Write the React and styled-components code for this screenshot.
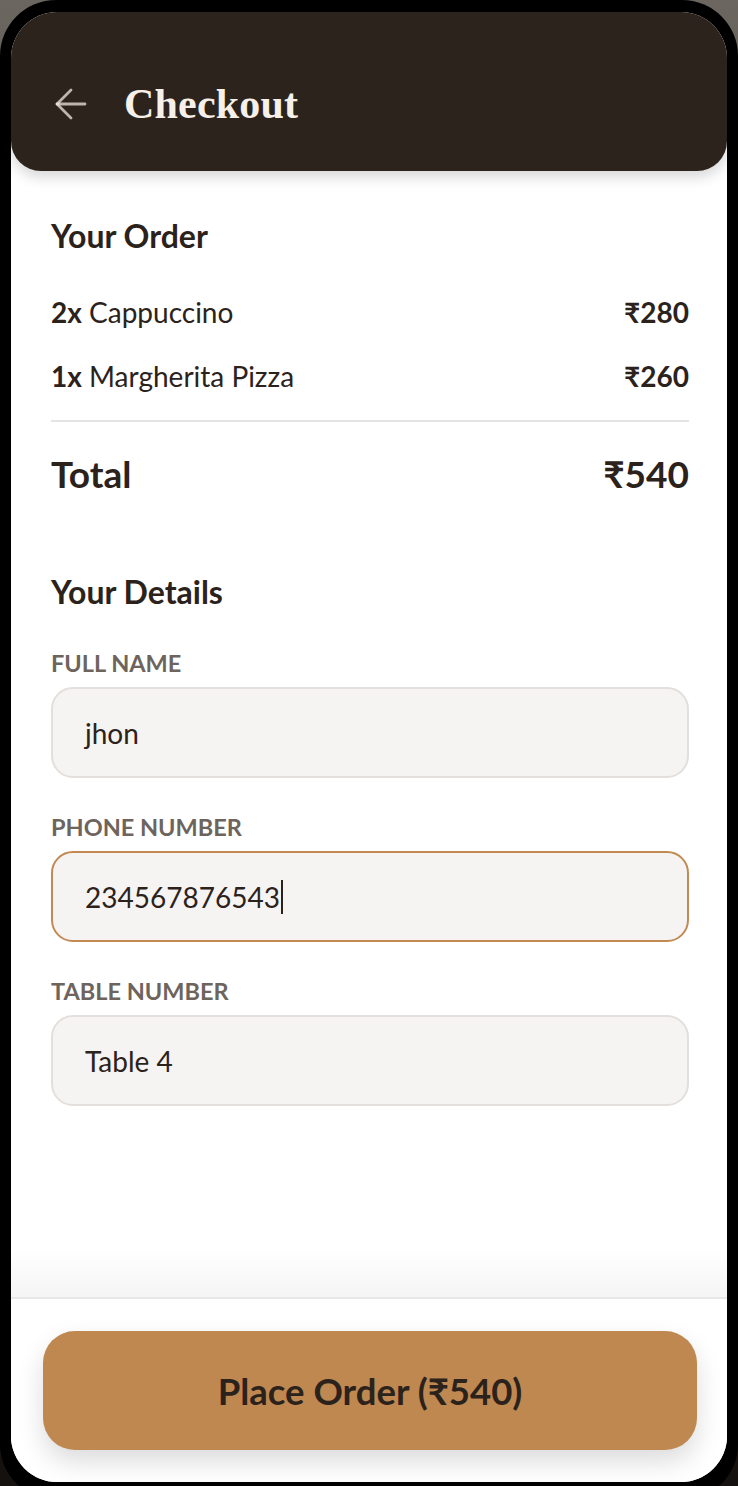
import styled, { createGlobalStyle } from 'styled-components'
import { ArrowLeft } from 'lucide-react'

const order = [
  { qty: 2, name: 'Cappuccino', price: 280 },
  { qty: 1, name: 'Margherita Pizza', price: 260 },
]

const fields = [
  { label: 'Full Name', value: 'jhon' },
  { label: 'Phone Number', value: '234567876543', active: true },
  { label: 'Table Number', value: 'Table 4' },
]

const App = () => (
  <>
    <GlobalStyle />
    <Frame>
      <Screen>
        <Header>
          <BackButton aria-label="Back">
            <ArrowLeft size={48} strokeWidth={1.4} />
          </BackButton>
          <Title>Checkout</Title>
        </Header>

        <Content>
          <SectionTitle>Your Order</SectionTitle>
          <ItemList>
            {order.map((item) => (
              <ItemRow key={item.name}>
                <span>
                  <Qty>{item.qty}x</Qty> {item.name}
                </span>
                <Price>₹{item.price}</Price>
              </ItemRow>
            ))}
          </ItemList>
          <TotalRow>
            <span>Total</span>
            <span>₹540</span>
          </TotalRow>

          <SectionTitle $spaced>Your Details</SectionTitle>
          <Form>
            {fields.map((f) => (
              <Field key={f.label}>
                <Label>{f.label}</Label>
                <InputBox $active={f.active}>
                  {f.value}
                  {f.active && <Caret />}
                </InputBox>
              </Field>
            ))}
          </Form>
        </Content>

        <Footer>
          <PlaceButton>Place Order (₹540)</PlaceButton>
        </Footer>
      </Screen>
    </Frame>
  </>
)

export default App

const GlobalStyle = createGlobalStyle`
  html, body {
    margin: 0;
    padding: 0;
  }
  body {
    background: linear-gradient(180deg, #6b6660 0%, #3a332e 50%, #14100d 100%);
    font-family: Lato, "Noto Sans", sans-serif;
    color: #2c221c;
    overflow: hidden;
  }
`

const Frame = styled.div`
  width: 738px;
  height: 1500px;
  box-sizing: border-box;
  padding: 12px 11px 18px;
  background: #000;
  border-radius: 56px;
`

const Screen = styled.div`
  height: 1470px;
  background: #fff;
  border-radius: 46px;
  overflow: hidden;
  display: flex;
  flex-direction: column;
`

const Header = styled.header`
  position: relative;
  z-index: 1;
  flex: none;
  height: 159px;
  box-sizing: border-box;
  padding: 24px 40px 0 36px;
  display: flex;
  align-items: center;
  gap: 29px;
  background: #2c231c;
  border-radius: 0 0 30px 30px;
  box-shadow: 0 6px 14px rgba(0, 0, 0, 0.16);
`

const BackButton = styled.button`
  display: flex;
  padding: 0;
  border: 0;
  background: none;
  color: rgba(245, 239, 232, 0.72);
`

const Title = styled.h1`
  margin: 0;
  font-family: "Liberation Serif", "DejaVu Serif", serif;
  font-weight: 700;
  font-size: 42px;
  line-height: 1;
  color: #f6f0e9;
  letter-spacing: 0.2px;
`

const Content = styled.main`
  flex: 1;
  padding: 48px 38px 0 40px;
`

const SectionTitle = styled.h2`
  margin: ${(p) => (p.$spaced ? '81px' : '0')} 0 0;
  font-size: 32px;
  line-height: 34px;
  font-weight: 700;
`

const ItemList = styled.div`
  margin-top: 27px;
  padding-bottom: 12px;
  border-bottom: 2px solid #e6e4e2;
`

const ItemRow = styled.div`
  display: flex;
  justify-content: space-between;
  align-items: center;
  height: 64px;
  font-size: 28px;
`

const Qty = styled.b`
  font-weight: 700;
`

const Price = styled.span`
  font-weight: 700;
`

const TotalRow = styled.div`
  display: flex;
  justify-content: space-between;
  align-items: center;
  margin-top: 32px;
  font-size: 37px;
  line-height: 40px;
  font-weight: 700;
`

const Form = styled.div`
  margin-top: 42px;
  display: flex;
  flex-direction: column;
  gap: 37px;
`

const Field = styled.div`
  display: flex;
  flex-direction: column;
  gap: 12px;
`

const Label = styled.div`
  font-size: 23.5px;
  line-height: 24px;
  font-weight: 700;
  text-transform: uppercase;
  color: #6d645d;
`

const InputBox = styled.div`
  height: 91px;
  box-sizing: border-box;
  padding: 0 32px;
  display: flex;
  align-items: center;
  background: #f6f4f2;
  border: 2px solid ${(p) => (p.$active ? '#c28a52' : '#e2dfdc')};
  border-radius: 22px;
  font-size: 28px;
  color: #2c221c;
`

const Caret = styled.span`
  display: inline-block;
  width: 2px;
  height: 34px;
  margin-left: 1px;
  background: #2c221c;
`

const Footer = styled.footer`
  position: relative;
  flex: none;
  height: 185px;
  box-sizing: border-box;
  padding: 32px 30px 0 32px;
  background: #fff;
  border-top: 2px solid #f1f1f1;

  &::before {
    content: '';
    position: absolute;
    left: 0;
    right: 0;
    bottom: 100%;
    height: 50px;
    background: linear-gradient(180deg, rgba(0, 0, 0, 0), rgba(0, 0, 0, 0.045));
  }
`

const PlaceButton = styled.button`
  width: 100%;
  height: 119px;
  border: 0;
  border-radius: 32px;
  background: #bf8850;
  color: #2c221c;
  font-family: Lato, "Noto Sans", sans-serif;
  font-size: 36.5px;
  font-weight: 700;
  box-shadow: 0 12px 26px rgba(0, 0, 0, 0.14);
`
